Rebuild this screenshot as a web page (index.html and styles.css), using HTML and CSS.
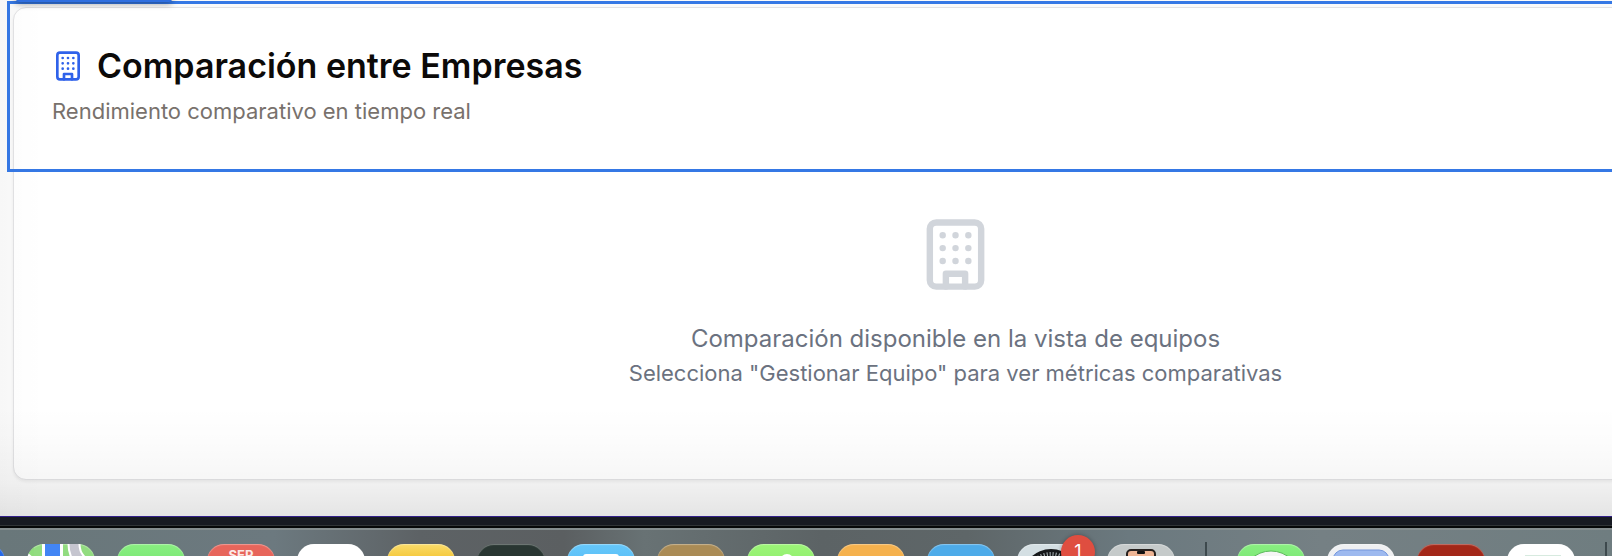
FILE: index.html
```html
<!DOCTYPE html>
<html lang="es">
<head>
<meta charset="utf-8">
<title>Comparación entre Empresas</title>
<link rel="stylesheet" href="styles.css">
</head>
<body>
<svg class="defs" aria-hidden="true">
  <symbol id="building" viewBox="0 0 24 24">
    <rect x="4" y="2" width="16" height="20" rx="2"/>
    <path d="M9 22v-4h6v4M8 6h.01M16 6h.01M12 6h.01M12 10h.01M12 14h.01M16 10h.01M16 14h.01M8 10h.01M8 14h.01"/>
  </symbol>
</svg>
<main class="page">
  <section class="card">
    <header class="card-header">
      <h1 class="card-title"><svg class="icon icon-title" aria-hidden="true"><use href="#building"/></svg>Comparación entre Empresas</h1>
      <p class="card-subtitle">Rendimiento comparativo en tiempo real</p>
      <div class="selection"></div>
      <div class="selection-tag"></div>
    </header>
    <div class="empty">
      <svg class="icon icon-empty" aria-hidden="true"><use href="#building"/></svg>
      <p class="empty-title">Comparación disponible en la vista de equipos</p>
      <p class="empty-hint">Selecciona "Gestionar Equipo" para ver métricas comparativas</p>
    </div>
  </section>
</main>
<div class="bezel"></div>
<nav class="dock" aria-label="Dock">
  <span class="app blue"></span>
  <span class="app maps"><svg class="art" viewBox="0 0 68 68"><path d="M0 9L7 14V0H0z" fill="#8fdc7c"/><path d="M0 8l8 7v10L0 17z" fill="#fff"/><path d="M15 0h21v30H15z" fill="#fff"/><path d="M18 0h15v30H18z" fill="#4285f4"/><path d="M47 0q0 15 14 22" fill="none" stroke="#fff" stroke-width="13"/><path d="M47 0q0 15 14 22" fill="none" stroke="#c5c5cf" stroke-width="9"/></svg></span>
  <span class="app green"></span>
  <span class="app calendar">SEP</span>
  <span class="app white"></span>
  <span class="app yellow"></span>
  <span class="app dark"></span>
  <span class="app sky"><svg class="art" viewBox="0 0 68 68"><rect x="16" y="10" width="36" height="40" rx="3" fill="#fff"/></svg></span>
  <span class="app brown"></span>
  <span class="app lime"><svg class="art" viewBox="0 0 68 68"><ellipse cx="40" cy="17" rx="7" ry="7" fill="#fff"/></svg></span>
  <span class="app orange"></span>
  <span class="app azure"></span>
  <span class="app clock"><svg class="art" viewBox="0 0 68 68"><circle cx="34" cy="34" r="29" fill="#151719"/><circle cx="34" cy="34" r="24" fill="none" stroke="#aeb8bb" stroke-width="4" stroke-dasharray="1 2"/></svg><span class="badge">1</span></span>
  <span class="app silver"><svg class="art" viewBox="0 0 68 68"><rect x="20" y="6" width="28" height="58" rx="4" fill="#edb494" stroke="#26201e" stroke-width="2"/><rect x="30" y="7" width="8" height="3" rx="1" fill="#111"/></svg></span>
  <span class="separator"></span>
  <span class="app green"><svg class="art" viewBox="0 0 68 68"><circle cx="34" cy="36" r="29" fill="#f5f5f5" stroke="#5cb95b"/></svg></span>
  <span class="app preview"><svg class="art" viewBox="0 0 68 68"><rect x="6" y="6" width="56" height="56" rx="10" fill="#9db9ef" stroke="#7496dc"/></svg></span>
  <span class="app red"></span>
  <span class="app white"><svg class="art" viewBox="0 0 68 68"><path d="M18 11h36v40H18z" fill="#d7eadf"/></svg></span>
  <span class="separator"></span>
</nav>
</body>
</html>
```
FILE: styles.css
```css
* { box-sizing: border-box; }
body {
  margin: 0;
  height: 100vh;
  overflow: hidden;
  display: flex;
  flex-direction: column;
  font-family: Inter, "Liberation Sans", sans-serif;
  background: #000;
}
.defs { position: absolute; width: 0; height: 0; }
h1, p { margin: 0; }

.page {
  flex: none;
  position: relative;
  background: #fafafa;
  padding: 7px 0 36px 13px;
}
.page::after {
  content: "";
  position: absolute;
  inset: 0;
  background:
    linear-gradient(to top, rgba(0,0,0,.085), rgba(0,0,0,.035) 34px, rgba(0,0,0,.01) 75px, transparent 110px),
    linear-gradient(to right, rgba(0,0,0,.012), transparent 45px);
  pointer-events: none;
}
.card {
  margin-right: -286px;
  border: 1px solid #e2e2e4;
  border-radius: 13px;
  background: #fff;
  box-shadow: 0 2px 3px rgba(0,0,0,.06);
}
.card-header {
  position: relative;
  padding: 38px 38px 35px;
  display: flex;
  flex-direction: column;
  gap: 9px;
}
.card-title {
  display: flex;
  align-items: center;
  gap: 13px;
  font-size: 34px;
  line-height: 40px;
  font-weight: 600;
  color: #0c0a09;
}
.card-subtitle {
  font-size: 22px;
  line-height: 32px;
  color: #78716c;
}
.icon {
  fill: none;
  stroke: currentColor;
  stroke-width: 2;
  stroke-linecap: round;
  stroke-linejoin: round;
}
.icon-title { width: 32px; height: 32px; color: #2f62ea; }
.icon-empty { width: 77px; height: 77px; margin-bottom: 27px; color: #d1d5db; }
.selection {
  position: absolute;
  inset: -7px -7px -10px;
  border: 3px solid #3578e5;
}
.selection-tag {
  position: absolute;
  left: 2px;
  top: -28px;
  width: 156px;
  height: 22px;
  border-radius: 3px;
  background: #2f6fe0;
  box-shadow: 0 2px 6px rgba(0,0,0,.35);
}
.empty {
  display: flex;
  flex-direction: column;
  align-items: center;
  padding: 54px 38px 91px;
  text-align: center;
  color: #6b7280;
}
.empty-title { font-size: 24px; line-height: 38px; }
.empty-hint { font-size: 22px; line-height: 30px; }

.bezel {
  flex: none;
  height: 12px;
  border-top: 1px solid #32208a;
  border-bottom: 2px solid #060809;
  background: linear-gradient(#171a22 8px, #303437 8px);
}
.dock {
  flex: 1;
  min-height: 0;
  display: flex;
  gap: 22px;
  padding-top: 14px;
  border-top: 2px solid #848d8f;
  background: linear-gradient(to right, #69777a, #6c797f 17%, #5d6265 26%, #5b5f61 35%, #687274 40%, #5c6365 51%, #5e6668 60%, #6b797f 70%, #758084 82%, #6f7d80);
}
.app {
  position: relative;
  flex: none;
  width: 68px;
  height: 68px;
  border-radius: 17px;
  box-shadow: inset 0 1px 1px rgba(255,255,255,.35);
}
.app:first-child { margin-left: -63px; }
.art { display: block; width: 68px; height: 68px; border-radius: 17px; }
.blue { background: #2468e8; }
.maps { background: #92dc80; }
.green { background: linear-gradient(#88ef80, #5bd45a); }
.calendar {
  background: #e7655b;
  color: #fbe9e7;
  font-size: 13px;
  line-height: 22px;
  font-weight: 700;
  text-align: center;
}
.white { background: #fff; }
.yellow { background: linear-gradient(#fadc6b, #f4c534 16px); }
.dark { background: #293632; }
.sky { background: linear-gradient(#65c7fa, #43aaf0); }
.brown { background: #aa8b55; }
.lime { background: linear-gradient(#9cf577, #76dc58); }
.orange { background: #f5b14d; }
.azure { background: #4dabe9; }
.clock { background: #d4dfe3; }
.silver { background: #c5caca; }
.preview { background: #eff0f2; }
.red { background: #a32718; }
.badge {
  position: absolute;
  left: 44px;
  top: -9px;
  width: 34px;
  height: 34px;
  border-radius: 50%;
  background: #df4e40;
  color: #fff;
  font-size: 18px;
  line-height: 34px;
  text-align: center;
  box-shadow: 0 0 4px rgba(0,0,0,.3);
}
.separator {
  flex: none;
  width: 2px;
  height: 60px;
  margin: -2px 8px 0;
  background: #3d494d;
}
```
